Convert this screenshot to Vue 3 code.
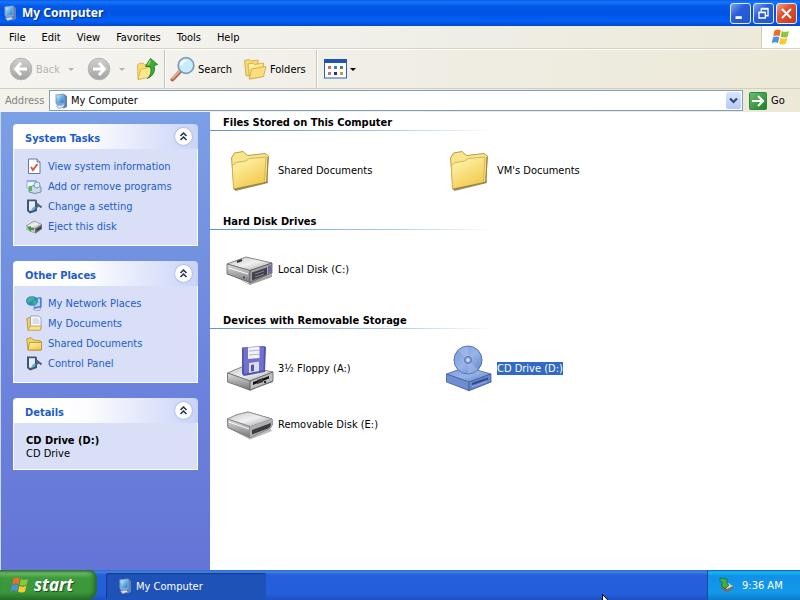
<script setup>
import { ref } from 'vue'

const menus = ['File', 'Edit', 'View', 'Favorites', 'Tools', 'Help']

const address = ref('My Computer')

const taskPanels = [
  {
    title: 'System Tasks',
    links: [
      { icon: 'i-info', text: 'View system information' },
      { icon: 'i-programs', text: 'Add or remove programs' },
      { icon: 'i-setting', text: 'Change a setting' },
      { icon: 'i-eject', text: 'Eject this disk' },
    ],
  },
  {
    title: 'Other Places',
    links: [
      { icon: 'i-network', text: 'My Network Places' },
      { icon: 'i-mydocs', text: 'My Documents' },
      { icon: 'i-smallfolder', text: 'Shared Documents' },
      { icon: 'i-setting', text: 'Control Panel' },
    ],
  },
  { title: 'Details', details: { name: 'CD Drive (D:)', kind: 'CD Drive' } },
]

const groups = [
  {
    title: 'Files Stored on This Computer',
    items: [
      { icon: 'i-folder', name: 'Shared Documents' },
      { icon: 'i-folder', name: "VM's Documents" },
    ],
  },
  { title: 'Hard Disk Drives', items: [{ icon: 'i-disk', name: 'Local Disk (C:)' }] },
  {
    title: 'Devices with Removable Storage',
    items: [
      { icon: 'i-floppy', name: '3½ Floppy (A:)' },
      { icon: 'i-cd', name: 'CD Drive (D:)', selected: true },
      { icon: 'i-removable', name: 'Removable Disk (E:)' },
    ],
  },
]
</script>

<template>
  <svg class="sprite" aria-hidden="true">
    <defs>
      <linearGradient id="g-folder" x1="0" y1="0" x2="0.6" y2="1">
        <stop offset="0" stop-color="#fff9b4" /><stop offset="1" stop-color="#f3c94e" />
      </linearGradient>
      <linearGradient id="g-metal" x1="0" y1="0" x2="1" y2="1">
        <stop offset="0" stop-color="#c4c4c4" /><stop offset="0.5" stop-color="#f0f0f0" /><stop offset="1" stop-color="#a2a2a2" />
      </linearGradient>
      <linearGradient id="g-side" x1="0" y1="0" x2="0" y2="1">
        <stop offset="0" stop-color="#dedede" /><stop offset="1" stop-color="#77777b" />
      </linearGradient>
      <linearGradient id="g-screen" x1="0" y1="0" x2="1" y2="1">
        <stop offset="0" stop-color="#d4f1ff" /><stop offset="0.5" stop-color="#69b8ec" /><stop offset="1" stop-color="#2b73c4" />
      </linearGradient>
      <linearGradient id="g-grey" x1="0" y1="0" x2="0" y2="1">
        <stop offset="0" stop-color="#cfcfcd" /><stop offset="1" stop-color="#a3a3a1" />
      </linearGradient>
      <linearGradient id="g-blue" x1="0" y1="0" x2="1" y2="1">
        <stop offset="0" stop-color="#7896d6" /><stop offset="0.5" stop-color="#9ab4e8" /><stop offset="1" stop-color="#5f80c8" />
      </linearGradient>
      <linearGradient id="g-go" x1="0" y1="0" x2="1" y2="1">
        <stop offset="0" stop-color="#6cbf6c" /><stop offset="1" stop-color="#1b7d28" />
      </linearGradient>
    </defs>

    <symbol id="i-computer" viewBox="0 0 16 16">
      <path d="M2.500 1.500 11 .5 12.500 2v9.500L4 12.500 2.500 10z" fill="#86a3cb" />
      <path d="M3.500 2.500 10.500 1.700V9.500L4.500 10.200z" fill="url(#g-screen)" />
      <path d="M11.500 1.500 14 3v11l-3.500 1.500-1-1 2-3z" fill="#5f82b6" />
      <path d="M3.500 13 9.500 12l1.500 2-5.500 1.700z" fill="#d9e6f5" stroke="#7992b5" stroke-width=".6" />
    </symbol>

    <symbol id="i-flag" viewBox="0 0 20 18">
      <path d="M3.500 2.500Q6.500.6 9.800 2.400L8.500 8.200Q5.300 6.600 2.200 8.400z" fill="#ee6a2f" />
      <path d="M10.900 2.900Q14 4.600 18 2.900L16.600 8.700Q13 10.400 9.600 8.700z" fill="#8dc73f" />
      <path d="M2 9.500Q5.200 7.700 8.300 9.300L7 15.100Q3.900 13.500.7 15.300z" fill="#4d8fe3" />
      <path d="M9.400 9.800Q12.600 11.500 16.300 9.800L15 15.600Q11.500 17.300 8.100 15.600z" fill="#fbc92c" />
    </symbol>

    <symbol id="i-back" viewBox="0 0 24 24">
      <circle cx="12" cy="12" r="10.800" fill="url(#g-grey)" stroke="#b4b4b2" />
      <path d="M12 6 6.500 12l5.500 6M7 12h11" fill="none" stroke="#fff" stroke-width="3" />
    </symbol>
    <symbol id="i-forward" viewBox="0 0 24 24">
      <circle cx="12" cy="12" r="10.800" fill="url(#g-grey)" stroke="#b4b4b2" />
      <path d="M12 6l5.500 6-5.500 6M17 12H6" fill="none" stroke="#fff" stroke-width="3" />
    </symbol>

    <symbol id="i-up" viewBox="0 0 24 24">
      <path d="M2.500 8 4 6.500 8 6l1.500 1.500L15 7v12L3 22.500z" fill="#f7dc72" stroke="#cfaa45" stroke-width=".8" />
      <path d="M3 22.500 6 12l12-2-2.500 10z" fill="#fbe78c" stroke="#d3b04c" stroke-width=".8" />
      <path d="M12.500 21.500Q17.500 17 15.500 9.500H10.500L15.500 1.500l7 6-3.500 1Q21.500 17 12.500 21.500z" fill="#3cae38" stroke="#1c7c20" stroke-width=".9" />
      <path d="M13 8 15.500 3.500" stroke="#96e084" stroke-width="1.300" />
    </symbol>

    <symbol id="i-search" viewBox="0 0 26 26">
      <path d="M2.500 23.500 10.500 15" stroke="#b06a54" stroke-width="4" stroke-linecap="round" />
      <path d="M2.500 22.500 10 14.500" stroke="#edb198" stroke-width="1.800" stroke-linecap="round" />
      <circle cx="16" cy="9.500" r="7.800" fill="#c8ecfa" stroke="#8099c0" stroke-width="1.700" />
      <path d="M11.500 9a5 5 0 0 1 5-4.500" fill="none" stroke="#fff" stroke-width="2.200" />
    </symbol>

    <symbol id="i-folders" viewBox="0 0 24 24">
      <path d="M1.500 3.500 6 2.500 7.500 4 15 3v14L3 19z" fill="#f6d96f" stroke="#cfa545" stroke-width=".8" />
      <path d="M5 7 10 6l1.500 1.500 9-1.500v13.500L6.500 22z" fill="url(#g-folder)" stroke="#cfa545" stroke-width=".8" />
      <path d="M6.500 22 8.500 12l14.500-2.500-2.500 10z" fill="#f9de7d" stroke="#cfa545" stroke-width=".8" />
    </symbol>

    <symbol id="i-views" viewBox="0 0 24 20">
      <rect x=".5" y=".5" width="22" height="18.500" fill="#fff" stroke="#2c5fb7" />
      <path d="M0 0h23v4H0z" fill="#1d55b5" />
      <path d="M4 7h3v3H4z" fill="#d0705c" /><path d="M10 7h3v3h-3z" fill="#3d7fc6" /><path d="M16 7h3v3h-3z" fill="#4a8458" />
      <path d="M4 13h3v3H4z" fill="#bd6f85" /><path d="M10 13h3v3h-3z" fill="#25377f" /><path d="M16 13h3v3h-3z" fill="#b3a348" />
    </symbol>

    <symbol id="i-go" viewBox="0 0 18 18">
      <rect x=".5" y=".5" width="17" height="17" rx="1" fill="url(#g-go)" stroke="#2f8a3b" />
      <path d="M9 4l5 5-5 5M13 9H3" fill="none" stroke="#fff" stroke-width="2.200" />
    </symbol>

    <symbol id="i-info" viewBox="0 0 16 16">
      <path d="M2.500 1h8.500l3 3v11.500H2.500z" fill="#fdfdff" stroke="#6477a0" />
      <path d="M11 1v3h3" fill="#cfd9ec" stroke="#6477a0" />
      <path d="M5 9l2 3 4.500-6" fill="none" stroke="#d4603a" stroke-width="2" />
    </symbol>
    <symbol id="i-programs" viewBox="0 0 16 16">
      <path d="M1 2.500h9.500V10H1z" fill="#eef4fb" stroke="#9db0cd" />
      <path d="M1 2h9.500v2H1z" fill="#8bb2df" />
      <path d="M3 9.500 9 7l6 2v5L9 15.500l-6-1.500z" fill="#ccdaea" stroke="#728db2" />
      <path d="M3 8h3v5H3z" fill="#5bb55a" />
      <circle cx="11" cy="7" r="3" fill="#dce9f6" stroke="#7b9ac0" />
    </symbol>
    <symbol id="i-setting" viewBox="0 0 16 16">
      <path d="M1 1.500h9l1 1v10.500L4 15.500 1 13z" fill="#3f5576" />
      <path d="M3 3.200h6v8.300l-5 1.500-1-1z" fill="#e4eefb" />
      <path d="M8 11 12.500 7.500M10.500 5.500l5 4" stroke="#50627f" stroke-width="2" />
      <path d="M6 12l3-3" stroke="#5fb3d4" stroke-width="2" />
    </symbol>
    <symbol id="i-eject" viewBox="0 0 16 16">
      <path d="M0 8 8 3l8 3.500v4.500L9.500 15.500 0 11.500z" fill="#696e73" />
      <path d="M0 8 8 3l8 3.500L9 10.500z" fill="url(#g-metal)" stroke="#777" stroke-width=".5" />
      <path d="M0 8l9 2.500v4.500L0 11.500z" fill="#c3c6c4" />
      <path d="M1 9.500 5 8v2h3v2H5v2z" fill="#3e9a3b" />
      <path d="M10.500 11.500 15 8.500v2L10.500 13z" fill="#34383d" />
    </symbol>
    <symbol id="i-network" viewBox="0 0 16 16">
      <path d="M7 3.500 14.500 2l1.200 1v9l-2 2H8z" fill="#587fbd" />
      <path d="M8.500 4.500 14 3.500v7.500l-5.500 1z" fill="#a9d4f6" />
      <ellipse cx="6" cy="6" rx="6" ry="4.800" fill="#2f86c5" />
      <path d="M1.500 4q3-3 6-1.500T5 6.500 2 8.500Q0 6 1.500 4zM7 6l4-.5-1 3.500-3 1z" fill="#3fb489" />
      <path d="M7 14l7-1.500v3H9.500z" fill="#dbe6f4" stroke="#7890b5" stroke-width=".6" />
    </symbol>
    <symbol id="i-mydocs" viewBox="0 0 16 16">
      <path d="M.8 3.500 5 2l1 12-4 1z" fill="#f4cf5d" stroke="#b99236" stroke-width=".8" />
      <path d="M4.500 1h8l2.500 2v10.500H4.500z" fill="#fdfdff" stroke="#98a4c1" />
      <path d="M6.500 4h6M6.500 6h7M6.500 8h7" stroke="#b4bdd3" />
      <path d="M2 15.200 4 11h11.500l-1 4.200z" fill="#f9e28b" stroke="#bd963a" stroke-width=".8" />
    </symbol>
    <symbol id="i-smallfolder" viewBox="0 0 16 16">
      <path d="M.8 4 5 2.500 7.500 5l7.500 1v9H2z" fill="#f5d35f" stroke="#b38a29" stroke-width=".8" />
      <path d="M2 15 3.500 7.500h12V15z" fill="url(#g-folder)" stroke="#b38a29" stroke-width=".8" />
    </symbol>

    <symbol id="i-folder" viewBox="0 0 48 48">
      <path d="M8 43 38 37 41.500 34.500 42 37 9.500 45z" fill="#6f6330" opacity=".7" />
      <path d="M5.500 12 8.500 7 17 5.500l4.500 4 17.500-2L42.500 10 40.500 36 8 42.500z" fill="#f9e68c" stroke="#b59b48" />
      <path d="M7.500 43 6.300 19.500 10 16.500l9.500-1.500 4-2.500L40 11l-1.500 25.500z" fill="url(#g-folder)" stroke="#cdae52" stroke-width=".9" />
      <path d="M42 11 41 36l-3 1L8 43.300" fill="none" stroke="#97803a" />
    </symbol>

    <symbol id="i-disk" viewBox="0 0 48 48">
      <path d="M2 28 22 38 46 29v3L24 40z" fill="#44444a" opacity=".5" />
      <path d="M1 19 20 12l26 6v10L24 37.500 1 29z" fill="#606066" />
      <path d="M1 19 20 12l26 6L24 25.500z" fill="url(#g-metal)" stroke="#77777b" stroke-width=".8" />
      <path d="M1 19l23 6.500v12L1 29z" fill="url(#g-side)" stroke="#66666a" stroke-width=".8" />
      <path d="M24 25.500 46 18v10L24 37.500z" fill="#a2a2a8" stroke="#5b5b60" stroke-width=".8" />
      <path d="M26 27.500l15-5v7L26 35.500z" fill="#414147" />
      <path d="M29 29l9-3M29 32l9-3" stroke="#84848c" />
      <path d="M11 17l5-2" stroke="#333" stroke-width="2" /><path d="M42 21l4-1.500v8L42 29z" fill="#70709c" />
      <path d="M3 23l19 6" stroke="#fff" />
      <circle cx="18" cy="32.500" r=".9" fill="#333" />
    </symbol>

    <symbol id="i-removable" viewBox="0 0 48 48">
      <path d="M4 29 24 39.500 46 31l-2-3z" fill="#777" opacity=".5" />
      <path d="M1.500 19Q10 14 22 12l24 7q2 5-1.500 9L24 37.500 2 27.500z" fill="#8a8a8e" stroke="#707075" />
      <path d="M1.500 19Q10 14 22 12l24 7-22 7.500z" fill="url(#g-metal)" stroke="#909094" stroke-width=".8" />
      <path d="M1.500 19 24 26.500v11L2 27.500z" fill="url(#g-side)" stroke="#808085" stroke-width=".8" />
      <path d="M24 26.500 46 19q2 5-1.500 9L24 37.500z" fill="#adadb2" />
      <path d="M26 30l19-7q0 4-3 5.500l-16 6z" fill="#3b3b40" />
      <path d="M3 22l20 7" stroke="#f8f8f8" />
    </symbol>

    <symbol id="i-floppy" viewBox="0 0 48 48">
      <path d="M4 38 24 47 47 37l-3-4z" fill="#555" opacity=".5" />
      <path d="M1.500 29 18 22l29 6v10L24 46 1.500 38z" fill="#707074" />
      <path d="M1.500 29 18 22l29 6-23 9z" fill="url(#g-metal)" stroke="#77777b" stroke-width=".8" />
      <path d="M1.500 29 24 37v9L1.500 38z" fill="url(#g-side)" stroke="#707074" stroke-width=".8" />
      <path d="M24 37 47 28v9l-23 9z" fill="#bdbdc0" stroke="#606065" stroke-width=".8" />
      <path d="M27 38l16-6v2.500L27 41z" fill="#111" /><circle cx="39" cy="38" r="1.200" fill="#222" />
      <path d="M31 36v4l6-2v-4z" fill="#333" />
      <path d="M16 3.500 38 2l2 1-1 25-21 4-2-2z" fill="#5353ae" />
      <path d="M17.500 4 38 2.500 37.500 26 18 30z" fill="#7371cf" />
      <path d="M22 3.500 33.500 2.800V14L22 15z" fill="#f2f2f8" />
      <path d="M23 7l10-.8M23 11l10-.8" stroke="#b3b3ce" />
      <path d="M23 19l10-1.500V27l-10 2z" fill="#dcdcea" /><path d="M25 21l3-.5V27l-3 .6z" fill="#5353ae" />
    </symbol>

    <symbol id="i-cd" viewBox="0 0 48 48">
      <path d="M3 38 24 47.500l23-9.500-3-4z" fill="#4a68a8" opacity=".4" />
      <path d="M1.500 30 21 23l25 7v8l-22 8.500L1.500 38z" fill="#4c6fba" />
      <path d="M1.500 30 21 23l25 7-22 8z" fill="url(#g-blue)" stroke="#4c6cac" stroke-width=".8" />
      <path d="M1.500 30 24 38v8.500L1.500 38z" fill="#6f8dd0" stroke="#4566aa" stroke-width=".8" />
      <path d="M24 38l22-8v8l-22 8.500z" fill="#6685cb" stroke="#40609f" stroke-width=".8" />
      <path d="M27 39l16-5.500v2L27 41z" fill="#2b4787" /><path d="M27 43l15-5.500" stroke="#94aee4" />
      <circle cx="23" cy="16" r="14" fill="url(#g-blue)" stroke="#5472b3" />
      <path d="M23 16 13 6.500Q18 2.500 23 2.500zM23 16l10 9.500q-5 4-10 4z" fill="#b6caf2" opacity=".4" />
      <circle cx="23" cy="16" r="3.500" fill="#89a5de" stroke="#5874b5" /><circle cx="23" cy="16" r="1.500" fill="#e9f0fd" />
    </symbol>

    <symbol id="i-tray" viewBox="0 0 16 16">
      <path d="M3 9 10 6l5 3v3l-6 3.500L3 12z" fill="#6c7071" />
      <path d="M4 9 10 6l5 3-6 3z" fill="#cfd2ce" />
      <path d="M2 1 9 2v5l2 1-4 4-4-4 1-1V5L2 4z" fill="#3fae45" stroke="#1b6c34" stroke-width=".8" />
    </symbol>
  </svg>

  <div class="desktop">
    <header class="titlebar">
      <svg class="icon16"><use href="#i-computer" /></svg>
      <h1>My Computer</h1>
      <div class="window-buttons">
        <button type="button" aria-label="Minimize">
          <svg viewBox="0 0 21 21"><path d="M5 15h7" stroke="#fff" stroke-width="3" /></svg>
        </button>
        <button type="button" aria-label="Restore">
          <svg viewBox="0 0 21 21"><path d="M8 8V5.500h7.500V13H13M8 5h8M5.500 9.500h7v6h-7zM5 9h8" fill="none" stroke="#fff" stroke-width="1.500" /></svg>
        </button>
        <button type="button" class="close" aria-label="Close">
          <svg viewBox="0 0 21 21"><path d="M5.500 5.500l10 10M15.500 5.500l-10 10" stroke="#fff" stroke-width="2.200" /></svg>
        </button>
      </div>
    </header>

    <nav class="menubar">
      <button v-for="menu in menus" :key="menu" type="button">{{ menu }}</button>
      <div class="brand"><svg><use href="#i-flag" /></svg></div>
    </nav>

    <div class="toolbar">
      <button type="button" class="tool back" disabled>
        <svg class="icon24"><use href="#i-back" /></svg>Back
        <i class="caret" />
      </button>
      <button type="button" class="tool forward" aria-label="Forward" disabled>
        <svg class="icon24"><use href="#i-forward" /></svg>
        <i class="caret" />
      </button>
      <button type="button" class="tool up" aria-label="Up">
        <svg class="icon24"><use href="#i-up" /></svg>
      </button>
      <span class="divider" />
      <button type="button" class="tool search"><svg class="icon26"><use href="#i-search" /></svg>Search</button>
      <button type="button" class="tool folders"><svg class="icon24"><use href="#i-folders" /></svg>Folders</button>
      <span class="divider" />
      <button type="button" class="tool views" aria-label="Views">
        <svg class="icon24 short"><use href="#i-views" /></svg>
        <i class="caret" />
      </button>
    </div>

    <div class="addressbar">
      <label for="address">Address</label>
      <div class="combo">
        <svg class="icon16"><use href="#i-computer" /></svg>
        <input id="address" v-model="address" type="text" />
        <button type="button" aria-label="Show addresses">
          <svg viewBox="0 0 15 17"><path d="M4 6.500l3.500 3.500L11 6.500" fill="none" stroke="#34487c" stroke-width="2.200" /></svg>
        </button>
      </div>
      <button type="button" class="go"><svg><use href="#i-go" /></svg>Go</button>
    </div>

    <div class="body">
      <aside class="sidebar">
        <section v-for="panel in taskPanels" :key="panel.title" class="panel">
          <header>
            <h2>{{ panel.title }}</h2>
            <button type="button" :aria-label="'Collapse ' + panel.title">
              <svg viewBox="0 0 17 17">
                <path d="M5.500 8l3-3 3 3M5.500 12l3-3 3 3" fill="none" stroke="#20304f" stroke-width="1.500" />
              </svg>
            </button>
          </header>
          <ul v-if="panel.links">
            <li v-for="link in panel.links" :key="link.text">
              <a href="#"><svg class="icon16"><use :href="'#' + link.icon" /></svg>{{ link.text }}</a>
            </li>
          </ul>
          <div v-else class="details">
            <strong>{{ panel.details.name }}</strong>
            <span>{{ panel.details.kind }}</span>
          </div>
        </section>
      </aside>

      <main class="content">
        <section v-for="group in groups" :key="group.title" class="group">
          <h2>{{ group.title }}</h2>
          <div class="items">
            <button v-for="item in group.items" :key="item.name" type="button" :class="['item', { selected: item.selected }]">
              <svg class="icon48"><use :href="'#' + item.icon" /></svg>
              <span>{{ item.name }}</span>
            </button>
          </div>
        </section>
      </main>
    </div>

    <footer class="taskbar">
      <button type="button" class="start"><svg><use href="#i-flag" /></svg>start</button>
      <button type="button" class="task"><svg class="icon16"><use href="#i-computer" /></svg>My Computer</button>
      <div class="tray"><svg class="icon16"><use href="#i-tray" /></svg><time>9:36 AM</time></div>
    </footer>

    <svg class="pointer" viewBox="0 0 12 19" aria-hidden="true">
      <path d="M.5.5v15l3.500-3.300 2.500 5.800 2.300-1-2.500-5.600H11z" fill="#fff" stroke="#000" />
    </svg>
  </div>
</template>

<style>
body {
  margin: 0;
  overflow: hidden;
}
</style>

<style scoped>
.sprite {
  position: absolute;
  width: 0;
  height: 0;
}

.desktop {
  position: relative;
  display: flex;
  flex-direction: column;
  height: 100vh;
  overflow: hidden;
  background: #fff;
  color: #000;
  font: 11px/13px "DejaVu Sans Condensed", "Noto Sans", sans-serif;
}

button,
input {
  margin: 0;
  padding: 0;
  border: 0;
  background: none;
  color: inherit;
  font: inherit;
}

h1,
h2,
ul {
  margin: 0;
  padding: 0;
}

svg {
  display: block;
  flex: none;
}

.icon16 {
  width: 16px;
  height: 16px;
}

.icon24 {
  width: 24px;
  height: 24px;
}

.icon24.short {
  height: 20px;
}

.icon26 {
  width: 26px;
  height: 26px;
}

.icon48 {
  width: 48px;
  height: 48px;
}

.titlebar {
  display: flex;
  flex: none;
  align-items: center;
  height: 26px;
  padding: 0 3px 0 2px;
  background: linear-gradient(#0a5ce8 0, #1677fa 2px, #0459e8 6px, #0053e4 14px, #0460f8 21px, #0148c8 26px);
}

.titlebar h1 {
  flex: 1;
  margin-left: 4px;
  color: #fff;
  font: bold 12px/16px "Noto Sans", sans-serif;
  text-shadow: 1px 1px 1px #0a2a80;
}

.window-buttons {
  display: flex;
  gap: 2px;
}

.window-buttons button {
  box-sizing: border-box;
  width: 21px;
  height: 21px;
  border: 1px solid #e4ecfb;
  border-radius: 3px;
  background: linear-gradient(135deg, #7ea5f4, #2a5ed8 40%, #2257cf);
}

.window-buttons button svg {
  width: 19px;
  height: 19px;
}

.window-buttons .close {
  background: linear-gradient(135deg, #f0a287, #df5230 40%, #c63c18);
}

.menubar {
  display: flex;
  flex: none;
  gap: 16px;
  align-items: center;
  height: 22px;
  padding-left: 9px;
  border-bottom: 1px solid #d8d4c4;
  background: linear-gradient(90deg, #f5f4f1, #f0efe8 50%, #ece9d8);
}

.brand {
  display: flex;
  align-items: center;
  justify-content: center;
  box-sizing: border-box;
  width: 39px;
  height: 22px;
  margin-left: auto;
  border-left: 1px solid #d2cebc;
  background: #fff;
}

.brand svg {
  width: 20px;
  height: 18px;
}

.toolbar {
  display: flex;
  flex: none;
  align-items: center;
  height: 38px;
  border-top: 1px solid #fff;
  border-bottom: 1px solid #d3cfbe;
  background: linear-gradient(90deg, #f5f4f1, #f0eee5 50%, #ece9d8);
}

.tool {
  display: flex;
  align-items: center;
  height: 36px;
}

.tool:disabled {
  color: #b5b4ad;
}

.caret {
  width: 0;
  height: 0;
  border: 3px solid transparent;
  border-top-color: currentcolor;
  border-bottom: 0;
}

.back {
  gap: 3px;
  width: 79px;
  padding-left: 9px;
}

.back .caret {
  margin-left: 5px;
}

.forward {
  gap: 8px;
  width: 48px;
  padding-left: 8px;
}

.up {
  width: 29px;
  margin-left: 8px;
}

.divider {
  align-self: stretch;
  width: 1px;
  border-right: 1px solid #fff;
  background: #cac6b5;
}

.search {
  gap: 2px;
  width: 73px;
  padding-left: 4px;
}

.folders {
  gap: 3px;
  width: 77px;
  padding-left: 4px;
}

.views {
  gap: 2px;
  padding-left: 6px;
}

.addressbar {
  display: flex;
  flex: none;
  align-items: center;
  height: 23px;
  padding-left: 5px;
  background: linear-gradient(90deg, #f3f2ec, #f0eee5 50%, #ece9d8);
}

.addressbar label {
  width: 44px;
  color: #858478;
}

.combo {
  display: flex;
  flex: 1;
  align-items: center;
  box-sizing: border-box;
  min-width: 0;
  height: 21px;
  padding: 0 1px 0 3px;
  border: 1px solid #7f9db9;
  background: #fff;
}

.combo input {
  flex: 1;
  min-width: 0;
  margin-left: 2px;
  outline: 0;
}

.combo button {
  width: 15px;
  height: 17px;
  border-radius: 2px;
  background: linear-gradient(#dbe5fd, #b6c9f5);
}

.go {
  display: flex;
  gap: 4px;
  align-items: center;
  width: 51px;
  margin-left: 6px;
}

.go svg {
  width: 18px;
  height: 18px;
}

.body {
  display: flex;
  flex: 1;
  min-height: 0;
}

.sidebar {
  display: flex;
  flex: none;
  flex-direction: column;
  gap: 15px;
  box-sizing: border-box;
  width: 210px;
  padding: 12px;
  border-left: 1px solid #c9d9f6;
  background: linear-gradient(#7ba0e6, #6b83dc 60%, #6574d7);
}

.panel {
  width: 185px;
}

.panel header {
  display: flex;
  align-items: center;
  justify-content: space-between;
  height: 25px;
  padding: 0 6px 0 12px;
  border-radius: 4px 4px 0 0;
  background: linear-gradient(90deg, #fff, #fdfdff 40%, #c8d3f7);
}

.panel h2 {
  padding-top: 3px;
  color: #215dc6;
  font-size: 11px;
}

.panel header button {
  width: 17px;
  height: 17px;
  border-radius: 50%;
  background: #fff;
  box-shadow: 0 0 2px #8290b5;
}

.panel header svg {
  width: 17px;
  height: 17px;
}

.panel ul,
.details {
  border: 1px solid #fff;
  border-top: 0;
  background: #d8dff7;
  list-style: none;
}

.panel ul {
  padding: 7px 12px 9px;
}

.panel a {
  display: flex;
  gap: 6px;
  align-items: center;
  height: 20px;
  color: #215dc6;
  text-decoration: none;
  white-space: nowrap;
}

.details {
  display: flex;
  flex-direction: column;
  padding: 11px 12px 9px;
}

.content {
  flex: 1;
  min-width: 0;
  overflow: hidden;
  background: #fff;
}

.group h2 {
  box-sizing: border-box;
  width: 285px;
  height: 19px;
  padding: 4px 0 0 13px;
  background: linear-gradient(90deg, #5f94d2, #a6c6ea 60%, #fff) bottom / 100% 1px no-repeat;
  font-size: 11px;
  white-space: nowrap;
}

.items {
  display: grid;
  grid-template-columns: repeat(auto-fill, 219px);
  row-gap: 8px;
  padding: 15px 16px 17px;
}

.item {
  display: flex;
  gap: 4px;
  align-items: center;
  white-space: nowrap;
}

.item.selected span {
  background: #316ac5;
  color: #fff;
}

.taskbar {
  display: flex;
  flex: none;
  align-items: stretch;
  height: 30px;
  background: linear-gradient(#3168d5 0, #4080e2 2px, #265fdc 5px, #245edb 24px, #1f50c0 30px);
  color: #fff;
}

.start {
  display: flex;
  gap: 4px;
  align-items: center;
  width: 97px;
  padding-left: 10px;
  border-radius: 0 8px 10px 0;
  background: linear-gradient(#2f7d31 0, #6db768 3px, #3c9a3c 8px, #3a983a 22px, #27702a 30px);
  box-shadow: inset -3px 0 4px #23682a;
  font: italic bold 17px/20px "Noto Sans", sans-serif;
  text-shadow: 1px 1px 1px #1c4a1c;
}

.start svg {
  width: 20px;
  height: 18px;
}

.task {
  display: flex;
  gap: 3px;
  align-items: center;
  width: 160px;
  margin: 3px 0 1px 9px;
  padding-left: 11px;
  border-radius: 2px;
  background: #1e52b7;
  box-shadow: inset 1px 1px 1px #153c8d;
}

.tray {
  display: flex;
  gap: 8px;
  align-items: center;
  box-sizing: border-box;
  width: 93px;
  margin-left: auto;
  padding-left: 10px;
  border-left: 1px solid #104ba0;
  background: linear-gradient(#0c59b9 0, #19b9f3 2px, #1290e8 6px, #129aeb 22px, #0d7bca 30px);
}

.pointer {
  position: absolute;
  top: 594px;
  left: 602px;
  width: 12px;
  height: 19px;
}
</style>
